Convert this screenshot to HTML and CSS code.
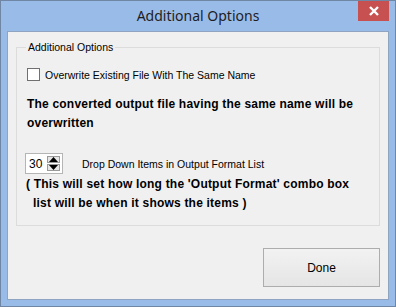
FILE: index.html
```html
<!DOCTYPE html>
<html lang="en">
<head>
    <meta charset="UTF-8">
    <title>Additional Options</title>
    <link rel="stylesheet" href="styles.css">
</head>
<body>
    <div class="window">
        <div class="titlebar">
            <span class="title">Additional Options</span>
            <div class="close">
                <svg width="12" height="10" viewBox="0 0 12 10">
                    <path d="M2 1 L10 9 M10 1 L2 9" stroke="#fff" stroke-width="2.4"/>
                </svg>
            </div>
        </div>
        <div class="client">
            <fieldset class="group">
                <legend>Additional Options</legend>

                <label class="check-row">
                    <span class="checkbox"></span>
                    <span>Overwrite Existing File With The Same Name</span>
                </label>

                <p class="note">The converted output file having the same name will be<br>overwritten</p>

                <div class="spin-row">
                    <div class="spinner">
                        <span class="spin-value">30</span>
                        <div class="spin-buttons">
                            <span class="spin-btn">
                                <svg width="9" height="5" viewBox="0 0 9 5"><path d="M0 5 L4.5 0 L9 5 Z" fill="#000"/></svg>
                            </span>
                            <span class="spin-btn">
                                <svg width="9" height="5" viewBox="0 0 9 5"><path d="M0 0 L4.5 5 L9 0 Z" fill="#000"/></svg>
                            </span>
                        </div>
                    </div>
                    <span>Drop Down Items in Output Format List</span>
                </div>

                <p class="note note-paren">( This will set how long the 'Output Format' combo box</p>
                <p class="note note-paren indent">list will be when it shows the items )</p>
            </fieldset>

            <div class="actions">
                <button class="done">Done</button>
            </div>
        </div>
    </div>
</body>
</html>
```

FILE: styles.css
```css
body{
    margin:0;
    font-family:"Liberation Sans", Arial, sans-serif;
}

.window{
    width:396px;
    height:307px;
    box-sizing:border-box;
    border:1px solid #6f86a4;
    background-color:#99bbe8;
    display:flex;
    flex-direction:column;
    position:relative;
}

.titlebar{
    height:30px;
    display:flex;
    align-items:center;
    justify-content:center;
}

.title{
    font-family:"Noto Sans", "Open Sans", sans-serif;
    font-size:14px;
    color:#1e1e1e;
    padding-bottom:2px;
}

.close{
    position:absolute;
    top:0;
    right:6px;
    width:31px;
    height:20px;
    background-color:#c75050;
    display:flex;
    align-items:center;
    justify-content:center;
}

.client{
    flex:1;
    margin:0 6px 6px 6px;
    background-color:#f0f0f0;
    border:1px solid #8ea4c0;
    display:flex;
    flex-direction:column;
    font-size:10.5px;
    color:#000;
}

.group{
    margin:9px 8px 0 8px;
    padding:0 0 0 10px;
    height:183px;
    border:1px solid #dcdcdc;
    border-radius:0;
}

.group legend{
    padding:0 2px;
    margin-left:-1px;
    font-size:10.5px;
}

.check-row{
    display:flex;
    align-items:center;
    gap:5px;
    margin-top:15px;
}

.checkbox{
    width:11px;
    height:11px;
    border:1px solid #707070;
    background-color:#fff;
}

.note{
    margin:14px 0 0 0;
    font-weight:bold;
    font-size:12px;
    letter-spacing:0.2px;
    line-height:19px;
}

.spin-row{
    display:flex;
    align-items:center;
    gap:19px;
    margin-top:20px;
    margin-left:-2px;
}

.spinner{
    width:38px;
    height:21px;
    box-sizing:border-box;
    border:1px solid #b5b5b5;
    background-color:#fff;
    display:flex;
    align-items:center;
    justify-content:space-between;
    padding:0 2px 0 3px;
    font-size:12px;
}

.spin-buttons{
    display:flex;
    flex-direction:column;
    gap:1px;
}

.spin-btn{
    width:13px;
    height:7px;
    box-sizing:border-box;
    border:1px solid #9a9a9a;
    background-color:#e6e6e6;
    display:flex;
    align-items:center;
    justify-content:center;
}

.note-paren{
    margin-top:0;
    margin-left:-1px;
}

.spin-row + .note-paren{
    margin-top:1px;
}

.indent{
    padding-left:7px;
}

.actions{
    display:flex;
    justify-content:flex-end;
    padding:22px 8px 0 0;
}

.done{
    width:117px;
    height:39px;
    border:1px solid #adadad;
    background:linear-gradient(#f2f2f2, #e5e5e5);
    font-family:"Liberation Sans", Arial, sans-serif;
    font-size:12px;
    color:#000;
}
```
